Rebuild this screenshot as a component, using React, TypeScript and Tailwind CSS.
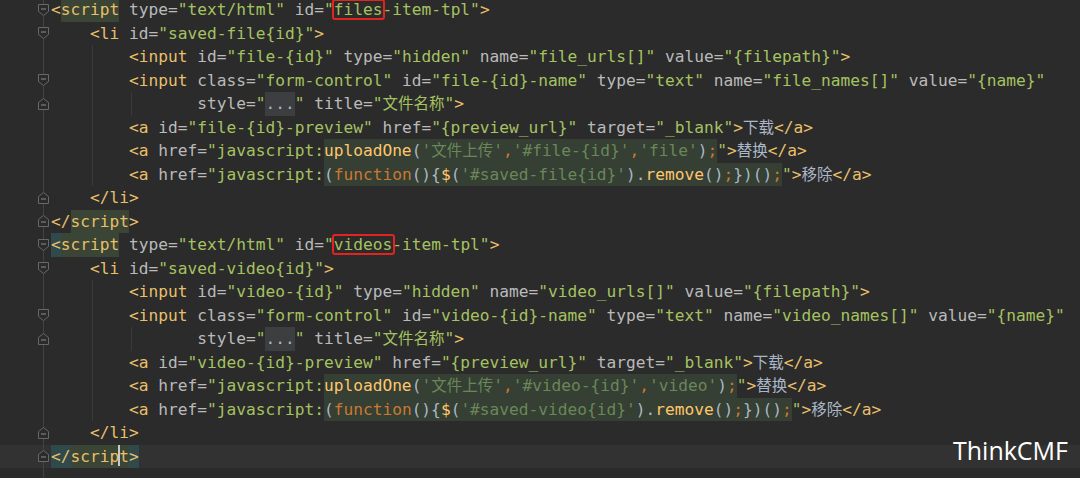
import React from 'react';

type P = { children?: React.ReactNode };

const Tg = ({ children }: P) => <span className="text-[#e8bf6a]">{children}</span>;
const At = ({ children }: P) => <span className="text-[#bababa]">{children}</span>;
const Vl = ({ children }: P) => <span className="text-[#a5c261]">{children}</span>;
const Tx = ({ children }: P) => <span className="text-[#a9b7c6]">{children}</span>;
const Fn = ({ children }: P) => <span className="text-[#ffc66d]">{children}</span>;
const St = ({ children }: P) => <span className="text-[#6a8759]">{children}</span>;
const Kw = ({ children }: P) => <span className="text-[#cc7832]">{children}</span>;
const Cjk = ({ children }: P) => (
  <span className="text-[15.5px] leading-none font-['Noto_Sans_CJK_SC',sans-serif]">{children}</span>
);

// injected javascript fragment
const Js = ({ children }: P) => <span className="inline-block leading-[23.5px] bg-[#353f33]">{children}</span>;
// tag name under caret
const Hl = ({ children }: P) => <span className="inline-block leading-[23.5px] bg-[#3a4535]">{children}</span>;
// matched brace
const Br = ({ children }: P) => <span className="inline-block leading-[23.5px] bg-[#30494a]">{children}</span>;
const Dots = () => <span className="inline-block leading-[23.5px] bg-[#3c3e3f] text-[#a9b7c6]">...</span>;

const Box = ({ children }: P) => (
  <span className="inline-block leading-[17px] border-2 border-[#e2231f] rounded-[3px] -ml-[2px] -mr-[3px] pr-[1px]">
    {children}
  </span>
);

const A = ({ n, v }: { n: string; v: string }) => (
  <>
    <At>{n}=</At>
    <Vl>{`"${v}"`}</Vl>
  </>
);

const Caret = () => (
  <span className="inline-block w-[2px] h-[21px] -mx-[1px] bg-[#c9c9c9] align-[-4px]" />
);

const FoldStart = () => (
  <svg width="11" height="12" viewBox="0 0 11 12" className="relative">
    <path d="M0.5 0.5H10.5V7.5L5.5 11.5L0.5 7.5Z" fill="#2b2b2b" stroke="#66696b" />
    <path d="M3 5H8" stroke="#8a8d8f" />
  </svg>
);

const FoldEnd = () => (
  <svg width="11" height="12" viewBox="0 0 11 12" className="relative">
    <path d="M0.5 11.5H10.5V4.5L5.5 0.5L0.5 4.5Z" fill="#2b2b2b" stroke="#66696b" />
    <path d="M3 7H8" stroke="#8a8d8f" />
  </svg>
);

type RowProps = {
  fold?: 'start' | 'end';
  guide?: boolean;
  guide2?: boolean;
  current?: boolean;
  children?: React.ReactNode;
};

const Row = ({ fold, guide, guide2, current, children }: RowProps) => (
  <div className={`relative flex h-[23.5px] leading-[23.5px] ${current ? 'bg-[#323232]' : ''}`}>
    <div className="w-[38px] shrink-0" />
    <div className="relative w-[11px] shrink-0 flex items-center justify-center">
      <div className="absolute left-[5px] top-0 h-full w-px bg-[#424242]" />
      {fold === 'start' && <FoldStart />}
      {fold === 'end' && <FoldEnd />}
    </div>
    <div className="w-[2px] shrink-0" />
    {guide && <div className="absolute left-[92px] top-0 h-full w-px bg-[#393939]" />}
    {guide2 && <div className="absolute left-[131px] top-0 h-full w-px bg-[#393939]" />}
    <div className="whitespace-pre">{children}</div>
  </div>
);

const Block = ({ kind, last }: { kind: 'file' | 'video'; last?: boolean }) => {
  const plural = kind === 'file' ? 'files' : 'videos';
  return (
    <>
      <Row fold="start">
        {last ? <Br><Tg>{'<'}</Tg></Br> : <Tg>{'<'}</Tg>}
        <Hl><Tg>script</Tg></Hl>{' '}
        <A n="type" v="text/html" />{' '}
        <At>id=</At><Vl>"</Vl><Box><Vl>{plural}</Vl></Box><Vl>-item-tpl"</Vl><Tg>{'>'}</Tg>
      </Row>
      <Row fold="start">
        {'    '}<Tg>{'<li'}</Tg>{' '}<A n="id" v={`saved-${kind}{id}`} /><Tg>{'>'}</Tg>
      </Row>
      <Row guide>
        {'        '}<Tg>{'<input'}</Tg>{' '}
        <A n="id" v={`${kind}-{id}`} />{' '}
        <A n="type" v="hidden" />{' '}
        <A n="name" v={`${kind}_urls[]`} />{' '}
        <A n="value" v="{filepath}" /><Tg>{'>'}</Tg>
      </Row>
      <Row fold="start" guide>
        {'        '}<Tg>{'<input'}</Tg>{' '}
        <A n="class" v="form-control" />{' '}
        <A n="id" v={`${kind}-{id}-name`} />{' '}
        <A n="type" v="text" />{' '}
        <A n="name" v={`${kind}_names[]`} />{' '}
        <A n="value" v="{name}" />
      </Row>
      <Row fold="end" guide guide2>
        {'               '}<At>style=</At><Vl>"</Vl><Dots /><Vl>"</Vl>{' '}
        <At>title=</At><Vl>"<Cjk>文件名称</Cjk>"</Vl><Tg>{'>'}</Tg>
      </Row>
      <Row guide>
        {'        '}<Tg>{'<a'}</Tg>{' '}
        <A n="id" v={`${kind}-{id}-preview`} />{' '}
        <A n="href" v="{preview_url}" />{' '}
        <A n="target" v="_blank" /><Tg>{'>'}</Tg><Tx><Cjk>下载</Cjk></Tx><Tg>{'</a>'}</Tg>
      </Row>
      <Row guide>
        {'        '}<Tg>{'<a'}</Tg>{' '}<At>href=</At><Vl>"javascript:</Vl>
        <Js>
          <Fn>uploadOne</Fn><Tx>(</Tx><St>'<Cjk>文件上传</Cjk>'</St><Kw>,</Kw>
          <St>{`'#${kind}-{id}'`}</St><Kw>,</Kw><St>{`'${kind}'`}</St><Tx>)</Tx><Kw>;</Kw>
        </Js>
        <Vl>"</Vl><Tg>{'>'}</Tg><Tx><Cjk>替换</Cjk></Tx><Tg>{'</a>'}</Tg>
      </Row>
      <Row guide>
        {'        '}<Tg>{'<a'}</Tg>{' '}<At>href=</At><Vl>"javascript:</Vl>
        <Js>
          <Tx>(</Tx><Kw>function</Kw><Tx>{'(){'}</Tx><Fn>$</Fn><Tx>(</Tx>
          <St>{`'#saved-${kind}{id}'`}</St><Tx>).</Tx><Fn>remove</Fn><Tx>()</Tx><Kw>;</Kw>
          <Tx>{'})()'}</Tx><Kw>;</Kw>
        </Js>
        <Vl>"</Vl><Tg>{'>'}</Tg><Tx><Cjk>移除</Cjk></Tx><Tg>{'</a>'}</Tg>
      </Row>
      <Row fold="end">
        {'    '}<Tg>{'</li>'}</Tg>
      </Row>
      {last ? (
        <Row fold="end" current>
          <Br><Tg>{'</'}</Tg></Br>
          <Hl><Tg>scrip</Tg><Caret /><Tg>t</Tg></Hl>
          <Br><Tg>{'>'}</Tg></Br>
        </Row>
      ) : (
        <Row fold="end">
          <Tg>{'</'}</Tg><Hl><Tg>script</Tg></Hl><Tg>{'>'}</Tg>
        </Row>
      )}
    </>
  );
};

export default function App() {
  return (
    <div className="relative w-[1080px] h-[478px] overflow-hidden bg-[#2b2b2b] font-['DejaVu_Sans_Mono','Noto_Sans_CJK_SC',monospace] text-[16.2px]">
      <div className="-mt-[2px]">
        <Block kind="file" />
        <Block kind="video" last />
        <Row />
      </div>
      <div className="absolute right-[12px] top-[438px] leading-none text-[25px] text-white font-['Open_Sans','Noto_Sans',sans-serif]">
        ThinkCMF
      </div>
    </div>
  );
}
